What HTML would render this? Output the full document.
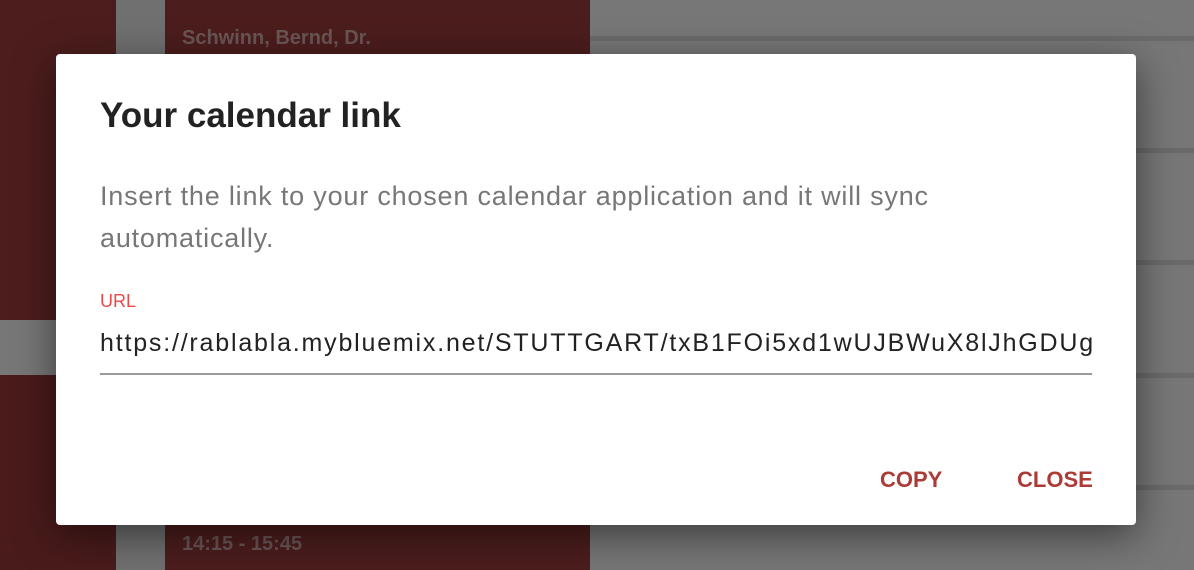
<!DOCTYPE html>
<html><head><meta charset="utf-8"><style>
*{margin:0;padding:0;box-sizing:border-box}
body{width:1194px;height:570px;overflow:hidden;background:#777;font-family:"Liberation Sans",Arial,sans-serif;position:relative}
.abs{position:absolute}
.line{position:absolute;left:590px;right:0;height:5px;background:#6a6a6a}
.dlg{position:absolute;left:56px;top:54px;width:1080px;height:471px;background:#fff;border-radius:4px;box-shadow:0 10px 40px rgba(0,0,0,.5)}
</style></head><body>
<div class="abs" style="left:0;top:0;width:116px;height:320px;background:#4d1d1d"></div>
<div class="abs" style="left:0;top:320px;width:116px;height:55px;background:#777"></div>
<div class="abs" style="left:0;top:375px;width:116px;height:195px;background:#4a1b1b"></div>
<div class="abs" style="left:116px;top:0;width:49px;height:570px;background:#707070"></div>
<div class="abs" style="left:165px;top:0;width:425px;height:570px;background:#4c1d1d"></div>
<div class="abs" style="left:182px;top:27px;font-size:20px;color:#6b5555;font-weight:bold">Schwinn, Bernd, Dr.</div>
<div class="abs" style="left:182px;top:533px;font-size:20px;color:#6b5555;font-weight:bold">14:15 - 15:45</div>
<div class="line" style="top:36px"></div>
<div class="line" style="top:148px"></div>
<div class="line" style="top:260px"></div>
<div class="line" style="top:373px"></div>
<div class="line" style="top:485px"></div>
<div class="dlg">
  <div class="abs" style="left:44px;top:42px;font-size:35px;color:#222;font-weight:bold;letter-spacing:0px">Your calendar link</div>
  <div class="abs" style="left:44px;top:121px;width:900px;font-size:27px;line-height:42px;letter-spacing:0.8px;color:#777">Insert the link to your chosen calendar application and it will sync automatically.</div>
  <div class="abs" style="left:44px;top:237px;font-size:18px;color:#e84a4a">URL</div>
  <div class="abs" style="left:44px;top:275px;width:992px;overflow:hidden;white-space:nowrap;font-size:25px;letter-spacing:1.8px;color:#222">https://rablabla.mybluemix.net/STUTTGART/txB1FOi5xd1wUJBWuX8lJhGDUg</div>
  <div class="abs" style="left:44px;top:319px;width:992px;height:2px;background:#9a9a9a"></div>
  <div class="abs" style="left:824px;top:413px;font-size:22px;font-weight:bold;color:#ac3b36">COPY</div>
  <div class="abs" style="left:961px;top:413px;font-size:22px;font-weight:bold;color:#ac3b36">CLOSE</div>
</div>
</body></html>
